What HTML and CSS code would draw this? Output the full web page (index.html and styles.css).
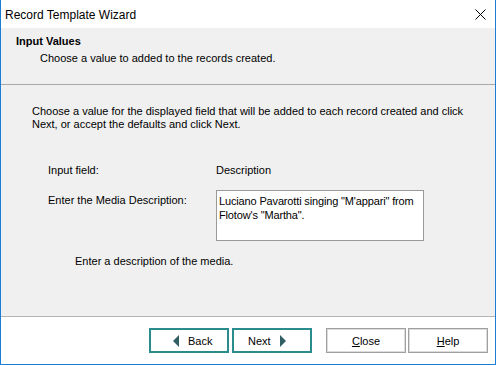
FILE: index.html
```html
<!DOCTYPE html>
<html>
<head>
<meta charset="utf-8">
<link rel="stylesheet" href="styles.css">
</head>
<body>
<div class="window">
  <div class="titlebar">
    <span class="title">Record Template Wizard</span>
    <svg class="close-x" width="11" height="11" viewBox="0 0 11 11"><path d="M0.5 0.5 L10.5 10.5 M10.5 0.5 L0.5 10.5" stroke="#000" stroke-width="1" fill="none"/></svg>
  </div>
  <div class="header">
    <div class="header-title">Input Values</div>
    <div class="header-sub">Choose a value to added to the records created.</div>
  </div>
  <div class="content">
    <p class="intro">Choose a value for the displayed field that will be added to each record created and click Next, or accept the defaults and click Next.</p>
    <div class="form">
      <div class="label">Input field:</div>
      <div class="value">Description</div>
      <div class="label label-desc">Enter the Media Description:</div>
      <div class="textbox">Luciano Pavarotti singing "M'appari" from Flotow's "Martha".</div>
    </div>
    <div class="hint">Enter a description of the media.</div>
  </div>
  <div class="footer">
    <div class="btn-group btn-group-nav">
      <button class="btn btn-nav btn-back"><span class="tri tri-left"></span><span>Back</span></button>
      <button class="btn btn-nav btn-next"><span>Next</span><span class="tri tri-right"></span></button>
    </div>
    <div class="btn-group">
      <button class="btn btn-plain"><u>C</u>lose</button>
      <button class="btn btn-plain"><u>H</u>elp</button>
    </div>
  </div>
</div>
</body>
</html>
```
FILE: styles.css
```css
html, body {
  margin: 0;
  padding: 0;
}
body {
  width: 496px;
  height: 365px;
  overflow: hidden;
  font-family: "Liberation Sans", Arial, sans-serif;
  font-size: 11px;
  color: #000;
}
.window {
  box-sizing: border-box;
  width: 496px;
  height: 365px;
  border: 1px solid #1a7fd4;
  border-top: none;
  display: flex;
  flex-direction: column;
  background: #f0f0f0;
}
.titlebar {
  height: 28px;
  flex: none;
  background: #fff;
  display: flex;
  align-items: center;
  justify-content: space-between;
  padding: 0 9px 0 4px;
}
.title {
  font-family: "Liberation Sans", Arial, sans-serif;
  font-size: 12px;
  padding-top: 1px;
}
.close-x {
  display: block;
  margin-top: 1px;
}
.header {
  flex: none;
  box-sizing: border-box;
  border-bottom: 1px solid #a8a8a8;
  height: 57px;
  padding: 6px 0 0 15px;
}
.header-title {
  font-weight: bold;
  line-height: 14px;
}
.header-sub {
  margin-top: 4px;
  padding-left: 24px;
  line-height: 13px;
}
.content {
  flex: 1;
  border-bottom: 1px solid #b4b4b4;
  padding: 20px 0 0 31px;
}
.intro {
  margin: 0;
  line-height: 13px;
  width: 440px;
}
.form {
  display: grid;
  grid-template-columns: 168px 208px;
  row-gap: 13px;
  margin: 33px 0 0 16px;
}
.label, .value {
  line-height: 13px;
}
.label-desc {
  padding-top: 4px;
}
.textbox {
  box-sizing: border-box;
  height: 51px;
  background: #fff;
  border: 1px solid #9a9a9a;
  padding: 3px 2px;
  line-height: 14px;
  letter-spacing: -0.15px;
}
.hint {
  margin: 14px 0 0 43px;
  line-height: 13px;
}
.footer {
  height: 47px;
  flex: none;
  background: #fff;
  display: flex;
  justify-content: flex-end;
  gap: 14px;
  padding: 11px 7px 0 0;
  box-sizing: border-box;
}
.btn-group {
  display: flex;
  gap: 2px;
}
.btn-group-nav {
  gap: 3px;
}
.btn {
  box-sizing: border-box;
  width: 80px;
  height: 25px;
  background: #fff;
  font-family: "Liberation Sans", Arial, sans-serif;
  font-size: 11px;
  color: #000;
  display: flex;
  align-items: center;
  justify-content: center;
  padding: 0;
}
.btn-nav {
  border: 2px solid #2a8c8c;
  justify-content: flex-start;
  gap: 9px;
}
.btn-back {
  padding-left: 22px;
}
.btn-next {
  padding-left: 14px;
}
.btn-plain {
  border: 1px solid #a0a0a0;
  outline: 1px solid #dcdcdc;
  outline-offset: -2px;
}
.tri {
  width: 0;
  height: 0;
  border-top: 6px solid transparent;
  border-bottom: 6px solid transparent;
}
.tri-left {
  border-right: 6px solid #2f5f63;
}
.tri-right {
  border-left: 6px solid #2f5f63;
}
```
